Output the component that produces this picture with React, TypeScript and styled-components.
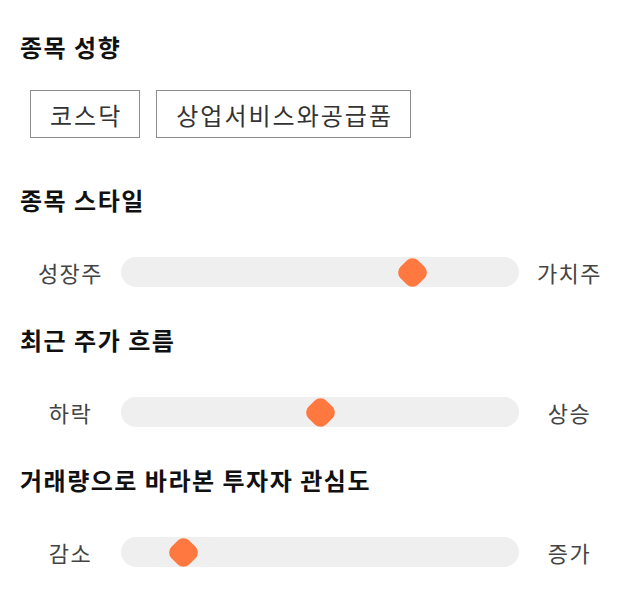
import styled, { createGlobalStyle } from 'styled-components';

const Global = createGlobalStyle`
  body { margin: 0; background: #fff; font-family: 'Noto Sans CJK KR', 'Noto Sans', sans-serif; }
`;

const Page = styled.div`
  padding: 22px 20px;
  display: flex; flex-direction: column;
`;
const Title = styled.h2`
  margin: 0; font-size: 24px; font-weight: 700; color: #111; line-height: 50px;
  letter-spacing: 1.5px;
`;
const Tags = styled.div`display: flex; gap: 16px; margin: 18px 0 37px 10px;`;
const Tag = styled.div`
  border: 1px solid #8c8c8c; height: 46px; padding: 0 17px 0 19px;
  display: flex; align-items: center; font-size: 24px; color: #333; letter-spacing: 2px;
`;
const Row = styled.div`
  display: grid; grid-template-columns: 101px 1fr 101px; align-items: center;
  height: 30px; margin: 31px 0 29px;
`;
const SideLabel = styled.div`text-align: center; font-size: 22px; color: #444; letter-spacing: 1.5px;`;
const Track = styled.div`
  position: relative; height: 30px; background: #efefef; border-radius: 15px;
`;
const Thumb = styled.div`
  position: absolute; top: 0.5px; width: 29px; height: 29px; margin-left: -14.5px;
  &::before {
    content: ''; position: absolute; inset: 2px;
    background: #ff7840; border-radius: 8px; transform: rotate(45deg);
  }
`;

const sliders = [
  { title: '종목 스타일', left: '성장주', right: '가치주', value: 0.75 },
  { title: '최근 주가 흐름', left: '하락', right: '상승', value: 0.5 },
  { title: '거래량으로 바라본 투자자 관심도', left: '감소', right: '증가', value: 0.13 },
];

export default function App() {
  return (
    <Page>
      <Global />
      <Title>종목 성향</Title>
      <Tags>
        <Tag>코스닥</Tag>
        <Tag>상업서비스와공급품</Tag>
      </Tags>
      {sliders.map((s, i) => (
        <div key={i}>
          <Title>{s.title}</Title>
          <Row>
            <SideLabel>{s.left}</SideLabel>
            <Track>
              <Thumb style={{ left: `calc(15px + (100% - 30px) * ${s.value})` }} />
            </Track>
            <SideLabel>{s.right}</SideLabel>
          </Row>
        </div>
      ))}
    </Page>
  );
}
